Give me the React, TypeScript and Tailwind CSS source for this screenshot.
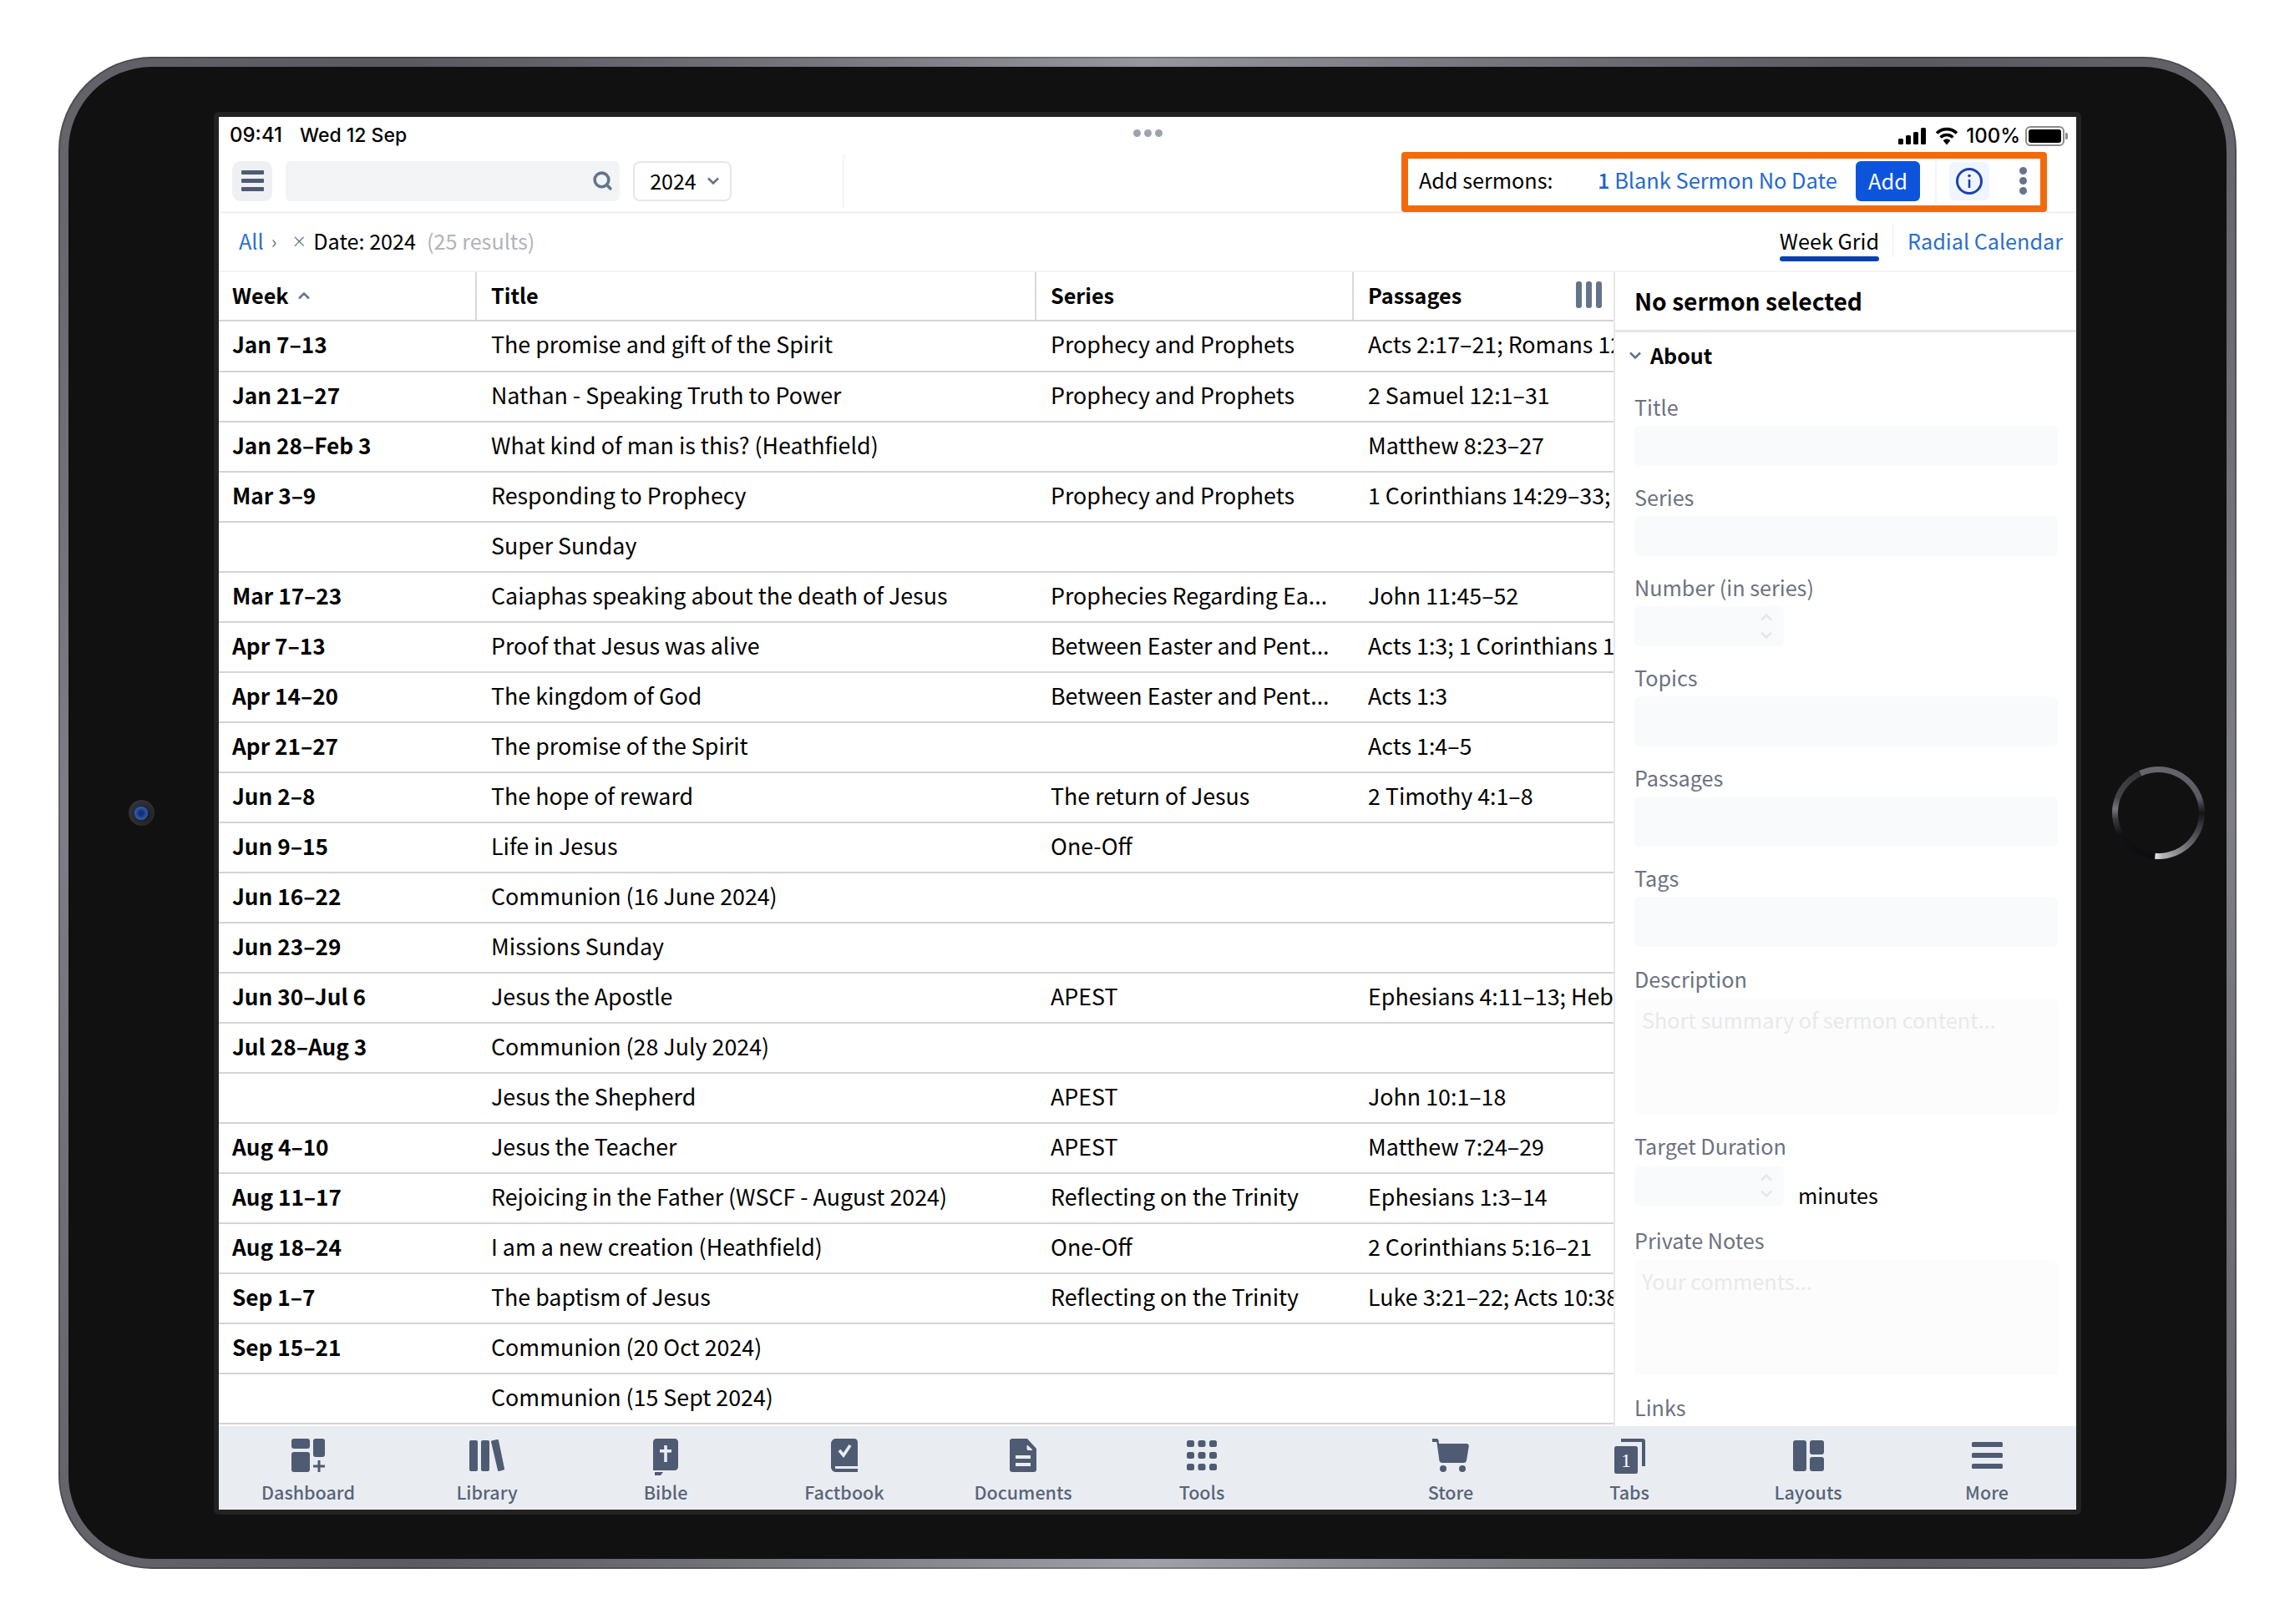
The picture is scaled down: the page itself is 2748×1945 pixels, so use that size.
import { Search } from "lucide-react";

const rows = [
    { week: "Jan 7–13", title: "The promise and gift of the Spirit", series: "Prophecy and Prophets", passages: "Acts 2:17–21; Romans 12:1–8" },
    { week: "Jan 21–27", title: "Nathan - Speaking Truth to Power", series: "Prophecy and Prophets", passages: "2 Samuel 12:1–31" },
    { week: "Jan 28–Feb 3", title: "What kind of man is this? (Heathfield)", series: "", passages: "Matthew 8:23–27" },
    { week: "Mar 3–9", title: "Responding to Prophecy", series: "Prophecy and Prophets", passages: "1 Corinthians 14:29–33; 1 Thessalonians" },
    { week: "", title: "Super Sunday", series: "", passages: "" },
    { week: "Mar 17–23", title: "Caiaphas speaking about the death of Jesus", series: "Prophecies Regarding Ea...", passages: "John 11:45–52" },
    { week: "Apr 7–13", title: "Proof that Jesus was alive", series: "Between Easter and Pent...", passages: "Acts 1:3; 1 Corinthians 15:1–8" },
    { week: "Apr 14–20", title: "The kingdom of God", series: "Between Easter and Pent...", passages: "Acts 1:3" },
    { week: "Apr 21–27", title: "The promise of the Spirit", series: "", passages: "Acts 1:4–5" },
    { week: "Jun 2–8", title: "The hope of reward", series: "The return of Jesus", passages: "2 Timothy 4:1–8" },
    { week: "Jun 9–15", title: "Life in Jesus", series: "One-Off", passages: "" },
    { week: "Jun 16–22", title: "Communion (16 June 2024)", series: "", passages: "" },
    { week: "Jun 23–29", title: "Missions Sunday", series: "", passages: "" },
    { week: "Jun 30–Jul 6", title: "Jesus the Apostle", series: "APEST", passages: "Ephesians 4:11–13; Hebrews 13:7" },
    { week: "Jul 28–Aug 3", title: "Communion (28 July 2024)", series: "", passages: "" },
    { week: "", title: "Jesus the Shepherd", series: "APEST", passages: "John 10:1–18" },
    { week: "Aug 4–10", title: "Jesus the Teacher", series: "APEST", passages: "Matthew 7:24–29" },
    { week: "Aug 11–17", title: "Rejoicing in the Father (WSCF - August 2024)", series: "Reflecting on the Trinity", passages: "Ephesians 1:3–14" },
    { week: "Aug 18–24", title: "I am a new creation (Heathfield)", series: "One-Off", passages: "2 Corinthians 5:16–21" },
    { week: "Sep 1–7", title: "The baptism of Jesus", series: "Reflecting on the Trinity", passages: "Luke 3:21–22; Acts 10:38" },
    { week: "Sep 15–21", title: "Communion (20 Oct 2024)", series: "", passages: "" },
    { week: "", title: "Communion (15 Sept 2024)", series: "", passages: "" },
];

function SignalIcon() {
    return (
        <svg width="34" height="20" viewBox="0 0 34 20" fill="currentColor">
            <rect x="0" y="13" width="6" height="7" rx="1.5" />
            <rect x="9" y="9" width="6" height="11" rx="1.5" />
            <rect x="18" y="5" width="6" height="15" rx="1.5" />
            <rect x="27" y="0" width="6" height="20" rx="1.5" />
        </svg>
    );
}

function WifiIcon() {
    return (
        <svg width="28" height="22" viewBox="0 0 28 22" fill="none" stroke="currentColor" strokeWidth="3.6">
            <path d="M2 7.5C9 1 19 1 26 7.5" />
            <path d="M6.5 12.5C11 8.5 17 8.5 21.5 12.5" />
            <path d="M14 21.5L9.6 16.2C12.2 14 15.8 14 18.4 16.2Z" fill="currentColor" stroke="none" />
        </svg>
    );
}

function BatteryIcon() {
    return (
        <div className="flex items-center">
            <div className="flex h-[24px] w-[47px] items-center rounded-[6px] border-2 border-[#8c8c8c] p-[2px]">
                <div className="h-full w-full rounded-[3px] bg-black" />
            </div>
            <div className="ml-[1px] h-[8px] w-[3px] rounded-r-[2px] bg-[#8c8c8c]" />
        </div>
    );
}

function Chevron({ up, className }: { up?: boolean; className?: string }) {
    return (
        <svg width="16" height="10" viewBox="0 0 16 10" fill="none" stroke="currentColor" strokeWidth="2.6" className={className}>
            <path d={up ? "M2 8.5L8 2.5L14 8.5" : "M2 1.5L8 7.5L14 1.5"} />
        </svg>
    );
}

function InfoIcon() {
    return (
        <svg width="34" height="34" viewBox="0 0 34 34" fill="none" stroke="#1e40af" strokeWidth="3">
            <circle cx="17" cy="17" r="14.5" />
            <path d="M17 15V25" strokeWidth="2.6" />
            <circle cx="17" cy="10.5" r="1.8" fill="#1e40af" stroke="none" />
        </svg>
    );
}

function DashboardIcon() {
    return (
        <svg width="40" height="40" viewBox="0 0 40 40" fill="currentColor">
            <rect x="0" y="0" width="22" height="12" rx="3" />
            <rect x="0" y="16" width="22" height="24" rx="3" />
            <rect x="26" y="0" width="14" height="22" rx="3" />
            <rect x="31.5" y="26" width="3" height="14" />
            <rect x="26" y="31.5" width="14" height="3" />
        </svg>
    );
}

function LibraryIcon() {
    return (
        <svg width="42" height="40" viewBox="0 0 42 40" fill="currentColor">
            <rect x="0" y="2" width="10" height="37" rx="2" />
            <rect x="14" y="2" width="10" height="37" rx="2" />
            <path d="M27.5 2.2L33.5 1C34.3 1 34.8 1.4 35 2L42 36C42.1 36.8 41.8 37.4 41 37.6L35.5 39C34.7 39.1 34.2 38.7 34 38L26 3.5C25.9 2.9 26.6 2.4 27.5 2.2Z" />
        </svg>
    );
}

function BibleIcon() {
    return (
        <svg width="30" height="44" viewBox="0 0 30 44" fill="currentColor">
            <path d="M4 0H26C28.2 0 30 1.8 30 4V34C30 36.2 28.2 38 26 38H0V4C0 1.8 1.8 0 4 0Z" />
            <path d="M2 40H12L9 44H2Z" />
            <rect x="13.2" y="8" width="3.6" height="20" fill="#e9edf2" />
            <rect x="8" y="13" width="14" height="3.6" fill="#e9edf2" />
        </svg>
    );
}

function FactbookIcon() {
    return (
        <svg width="32" height="40" viewBox="0 0 32 40" fill="currentColor">
            <path d="M6 0H28C30.2 0 32 1.8 32 4V40H6C2.7 40 0 37.3 0 34V6C0 2.7 2.7 0 6 0Z" />
            <rect x="5" y="33" width="27" height="3" fill="#e9edf2" />
            <path d="M10 14L15 20L23 8" fill="none" stroke="#e9edf2" strokeWidth="3.6" />
        </svg>
    );
}

function DocumentsIcon() {
    return (
        <svg width="32" height="40" viewBox="0 0 32 40" fill="currentColor">
            <path d="M3 0H21L32 12V37C32 38.7 30.7 40 29 40H3C1.3 40 0 38.7 0 37V3C0 1.3 1.3 0 3 0Z" />
            <path d="M21 8V12.5C21 13 21.5 13.5 22 13.5H27Z" fill="#e9edf2" stroke="#e9edf2" />
            <rect x="7" y="20" width="18" height="4" fill="#e9edf2" />
            <rect x="7" y="29" width="18" height="4" fill="#e9edf2" />
        </svg>
    );
}

function ToolsIcon() {
    return (
        <svg width="36" height="40" viewBox="0 0 36 40" fill="currentColor">
            {[2, 16, 30].map((y) =>
                [0, 13.5, 27].map((x) => <rect key={`${x}-${y}`} x={x} y={y} width="9" height="8" rx="2.5" />)
            )}
        </svg>
    );
}

function StoreIcon() {
    return (
        <svg width="44" height="40" viewBox="0 0 44 40" fill="currentColor">
            <path d="M0 0H5C6.5 0 7.5 1 7.6 2.5L8 6H41C43 6 44 7.5 43.8 9L41 26C40.7 27.8 39.5 29 37.6 29H12C10 29 8.6 27.8 8.4 26L5.4 4H0Z" />
            <circle cx="13" cy="36" r="4" />
            <circle cx="36" cy="36" r="4" />
        </svg>
    );
}

function TabsIcon() {
    return (
        <svg width="37" height="42" viewBox="0 0 37 42" fill="currentColor">
            <path d="M8 0H34C35.7 0 37 1.3 37 3V33H33V4H8Z" />
            <rect x="0" y="9" width="28" height="33" rx="2.5" />
            <text x="14" y="34" textAnchor="middle" fontSize="24" fontFamily="Liberation Serif, serif" fill="#ffffff">1</text>
        </svg>
    );
}

function LayoutsIcon() {
    return (
        <svg width="37" height="40" viewBox="0 0 37 40" fill="currentColor">
            <rect x="0" y="2" width="16" height="37" rx="3" />
            <rect x="20" y="2" width="17" height="17" rx="3" />
            <rect x="20" y="22" width="17" height="17" rx="3" />
        </svg>
    );
}

function MoreIcon() {
    return (
        <svg width="37" height="40" viewBox="0 0 37 40" fill="currentColor">
            <rect x="0" y="4" width="37" height="6" rx="1.5" />
            <rect x="0" y="17" width="37" height="6" rx="1.5" />
            <rect x="0" y="30" width="37" height="6" rx="1.5" />
        </svg>
    );
}

function TabItem({ icon, label }: { icon: React.ReactNode; label: string }) {
    return (
        <div className="flex w-[214px] flex-col items-center">
            <div className="flex h-[40px] items-start justify-center">{icon}</div>
            <div className="mt-[9px] text-[21.5px] leading-[30px] font-medium text-[#5a6478]">{label}</div>
        </div>
    );
}

function Spinner({ gap }: { gap: string }) {
    return (
        <div className={`flex h-full w-[179px] flex-col items-end justify-center rounded-[6px] bg-[#f9fafb] pr-[13px] ${gap}`}>
            <Chevron up className="text-[#e5e7eb]" />
            <Chevron className="text-[#e5e7eb]" />
        </div>
    );
}

function Label({ text, className }: { text: string; className?: string }) {
    return <div className={`text-[25.2px] leading-[32px] text-[#6b7280] ${className ?? ""}`}>{text}</div>;
}

export default function App() {
    return (
        <div className="h-[1945px] w-[2748px] overflow-hidden bg-white pt-[68px] pl-[70px] font-['Noto_Sans_CJK_KR',sans-serif] text-black">
            {/* device frame */}
            <div className="h-[1811px] w-[2608px] rounded-[112px] bg-[conic-gradient(from_0deg,#96969d,#5a5a60_45deg,#7e7e86_90deg,#5a5a60_135deg,#a0a0a8_180deg,#5a5a60_225deg,#7e7e86_270deg,#5a5a60_315deg,#96969d)] p-[12px] shadow-[inset_0_0_0_2px_rgba(0,0,0,0.22)]">
                <div className="flex h-[1787px] w-[2584px] items-center rounded-[100px] bg-[#111111]">
                    <div className="flex flex-1 justify-center">
                        <div className="flex h-[31px] w-[31px] items-center justify-center rounded-full bg-[radial-gradient(circle_at_60%_60%,#1a1a1e,#3c3c42)]">
                            <div className="h-[16px] w-[16px] rounded-full bg-[radial-gradient(circle,#143070_20%,#2f5fc0_70%)]" />
                        </div>
                    </div>

                    <div className="box-content flex h-[1668px] w-[2224px] flex-col overflow-hidden rounded-[6px] border-[6px] border-[#222222] bg-white">
                        {/* status bar */}
                        <div className="relative flex h-[46px] shrink-0 items-center pr-[10px] pl-[13px] font-['Inter',sans-serif] text-[24px] leading-[30px]">
                            <span className="mb-[2px] font-medium">09:41</span>
                            <span className="mb-[2px] ml-[21px] text-[23px] font-medium">Wed 12 Sep</span>
                            <div className="absolute top-[15px] left-[1095px] flex gap-[4px]">
                                <div className="h-[9px] w-[9px] rounded-full bg-[#9ca3af]" />
                                <div className="h-[9px] w-[9px] rounded-full bg-[#9ca3af]" />
                                <div className="h-[9px] w-[9px] rounded-full bg-[#9ca3af]" />
                            </div>
                            <div className="ml-auto flex items-center">
                                <SignalIcon />
                                <div className="ml-[10px]">
                                    <WifiIcon />
                                </div>
                                <span className="ml-[9px] font-medium">100%</span>
                                <div className="ml-[6px]">
                                    <BatteryIcon />
                                </div>
                            </div>
                        </div>

                        {/* toolbar */}
                        <div className="relative flex h-[70px] shrink-0 items-center border-b-[3px] border-[#f3f4f6] pb-[5px] pl-[16px] whitespace-nowrap">
                            <div className="flex h-[48px] w-[48px] flex-col items-center justify-center gap-[5px] rounded-[10px] bg-[#eef0f3]">
                                <div className="h-[5px] w-[27px] rounded-[1px] bg-[#4f5b73]" />
                                <div className="h-[5px] w-[27px] rounded-[1px] bg-[#4f5b73]" />
                                <div className="h-[5px] w-[27px] rounded-[1px] bg-[#4f5b73]" />
                            </div>
                            <div className="ml-[16px] flex h-[48px] w-[400px] items-center justify-end rounded-[6px] bg-[#f3f4f6] pr-[8px]">
                                <Search size={25} strokeWidth={3.4} className="text-[#64748b]" />
                            </div>
                            <div className="ml-[16px] flex h-[48px] w-[118px] items-center justify-center gap-[12px] rounded-[8px] border-2 border-[#e5e7eb] pb-[2px] pl-[6px] text-[25px] leading-[32px]">
                                2024
                                <Chevron className="mt-[2px] text-[#64748b]" />
                            </div>
                            <div className="ml-[133px] h-[64px] w-[2px] bg-[#f3f4f6]" />

                            <span className="mb-[3px] ml-[688px] w-[214px] text-[25.2px] leading-[32px]">Add sermons:</span>
                            <span className="mb-[3px] w-[309px] text-[25.4px] leading-[32px] text-[#2468d2]">
                                <span className="font-medium text-[#1a5fd6]">1</span> Blank Sermon No Date
                            </span>
                            <div className="flex h-[48px] w-[77px] items-center justify-center rounded-[6px] bg-[#0d54dd] pb-[2px] text-[25.4px] leading-[32px] text-white">Add</div>
                            <div className="ml-[18px] h-[60px] w-[2px] bg-[#f3f4f6]" />
                            <div className="ml-[15px] flex h-[46px] w-[48px] items-center justify-center rounded-[6px] bg-[#eff6ff]">
                                <InfoIcon />
                            </div>
                            <div className="ml-[36px] flex flex-col gap-[3px]">
                                <div className="h-[9px] w-[9px] rounded-full bg-[#64748b]" />
                                <div className="h-[9px] w-[9px] rounded-full bg-[#64748b]" />
                                <div className="h-[9px] w-[9px] rounded-full bg-[#64748b]" />
                            </div>

                            {/* orange callout drawn over the toolbar */}
                            <div className="absolute top-[-4px] left-[1416px] h-[72px] w-[773px] rounded-[4px] border-[8px] border-[#f26a0c]" />
                        </div>

                        {/* breadcrumb row */}
                        <div className="flex h-[70px] shrink-0 items-center border-b-[2px] border-[#f3f4f6] pr-[16px] pb-[3px] pl-[24px] text-[25.2px] leading-[32px]">
                            <span className="text-[#2f6fd0]">All</span>
                            <span className="ml-[9px] text-[22px] text-[#64748b]">›</span>
                            <span className="ml-[18px] text-[18px] text-[#64748b]">×</span>
                            <span className="ml-[8px]">Date: 2024</span>
                            <span className="ml-[13px] text-[#b0b4ba]">(25 results)</span>
                            <div className="ml-auto flex h-full flex-col justify-end">
                                <span className="mb-[3px]">Week Grid</span>
                                <div className="mb-[8px] h-[6px] rounded-[3px] bg-[#0a3fb0]" />
                            </div>
                            <div className="mx-[16px] h-[40px] w-[2px] bg-[#f3f4f6]" />
                            <span className="text-[#2a6fd0]">Radial Calendar</span>
                        </div>

                        {/* main area */}
                        <div className="flex min-h-0 flex-1">
                            <div className="w-[1670px] shrink-0 text-[26.8px] leading-[36px]">
                                <div className="flex h-[59px] items-stretch border-b-2 border-[#d4d4d4] text-[25.2px] font-semibold">
                                    <div className="flex w-[309px] items-center gap-[10px] border-r-2 border-[#d9d9d9] pb-[3px] pl-[16px]">
                                        Week
                                        <Chevron up className="mt-[2px] text-[#64748b]" />
                                    </div>
                                    <div className="flex w-[670px] items-center border-r-2 border-[#d9d9d9] pb-[3px] pl-[17px]">Title</div>
                                    <div className="flex w-[380px] items-center border-r-2 border-[#d9d9d9] pb-[3px] pl-[17px]">Series</div>
                                    <div className="flex flex-1 items-center pr-[14px] pb-[3px] pl-[17px]">
                                        Passages
                                        <div className="ml-auto flex h-[32px] gap-[5px]">
                                            <div className="h-full w-[7px] rounded-[3px] bg-[#64748b]" />
                                            <div className="h-full w-[7px] rounded-[3px] bg-[#64748b]" />
                                            <div className="h-full w-[7px] rounded-[3px] bg-[#64748b]" />
                                        </div>
                                    </div>
                                </div>
                                {rows.map((row, index) => (
                                    <div key={index} className={`flex items-center border-b-2 border-[#d4d4d4] pb-[3px] ${index === 0 ? "h-[61px] pb-[5px]" : "h-[60px]"}`}>
                                        <div className="w-[309px] shrink-0 pl-[16px] text-[26.2px] font-semibold">{row.week}</div>
                                        <div className="w-[670px] shrink-0 pl-[17px] whitespace-nowrap">{row.title}</div>
                                        <div className="w-[380px] shrink-0 pl-[17px] whitespace-nowrap">{row.series}</div>
                                        <div className="min-w-0 flex-1 overflow-hidden pl-[17px] whitespace-nowrap">{row.passages}</div>
                                    </div>
                                ))}
                            </div>

                            {/* right panel */}
                            <div className="min-w-0 flex-1 overflow-hidden border-l-2 border-[#e5e7eb]">
                                <div className="flex h-[72px] items-center border-b-[3px] border-[#e5e7eb] pl-[23px] text-[28.2px] leading-[38px] font-semibold">No sermon selected</div>
                                <div className="mt-[10px] flex h-[36px] items-center pl-[16px] text-[25px] leading-[32px] font-semibold">
                                    <Chevron className="text-[#64748b]" />
                                    <span className="mb-[2px] ml-[10px]">About</span>
                                </div>
                                <div className="flex flex-col pt-[27px] pr-[22px] pl-[23px]">
                                    <Label text="Title" />
                                    <div className="mt-[7px] h-[48px] rounded-[6px] bg-[#f9fafb]" />
                                    <Label text="Series" className="mt-[21px]" />
                                    <div className="mt-[7px] h-[48px] rounded-[6px] bg-[#f9fafb]" />
                                    <Label text="Number (in series)" className="mt-[21px]" />
                                    <div className="mt-[7px] h-[48px]">
                                        <Spinner gap="gap-[12px]" />
                                    </div>
                                    <Label text="Topics" className="mt-[21px]" />
                                    <div className="mt-[7px] h-[60px] rounded-[6px] bg-[#f9fafb]" />
                                    <Label text="Passages" className="mt-[21px]" />
                                    <div className="mt-[7px] h-[60px] rounded-[6px] bg-[#f9fafb]" />
                                    <Label text="Tags" className="mt-[21px]" />
                                    <div className="mt-[7px] h-[60px] rounded-[6px] bg-[#f9fafb]" />
                                    <Label text="Description" className="mt-[22px]" />
                                    <div className="mt-[8px] h-[139px] rounded-[6px] bg-[#fcfcfc] px-[9px] py-[9px] text-[25.2px] leading-[32px] text-[#e8e9ec]">Short summary of sermon content...</div>
                                    <Label text="Target Duration" className="mt-[21px]" />
                                    <div className="mt-[9px] flex h-[47px] items-end">
                                        <Spinner gap="gap-[10px]" />
                                        <span className="mb-[-3px] ml-[17px] text-[25.2px] leading-[32px]">minutes</span>
                                    </div>
                                    <Label text="Private Notes" className="mt-[25px]" />
                                    <div className="mt-[8px] h-[138px] rounded-[6px] bg-[#fcfcfc] px-[9px] py-[9px] text-[25.2px] leading-[32px] text-[#e8e9ec]">Your comments...</div>
                                    <Label text="Links" className="mt-[22px]" />
                                </div>
                            </div>
                        </div>

                        {/* tab bar */}
                        <div className="flex h-[100px] shrink-0 justify-between bg-[#e9edf2] pt-[15px] text-[#4f5b73]">
                            <div className="flex">
                                <TabItem icon={<DashboardIcon />} label="Dashboard" />
                                <TabItem icon={<LibraryIcon />} label="Library" />
                                <TabItem icon={<BibleIcon />} label="Bible" />
                                <TabItem icon={<FactbookIcon />} label="Factbook" />
                                <TabItem icon={<DocumentsIcon />} label="Documents" />
                                <TabItem icon={<ToolsIcon />} label="Tools" />
                            </div>
                            <div className="flex">
                                <TabItem icon={<StoreIcon />} label="Store" />
                                <TabItem icon={<TabsIcon />} label="Tabs" />
                                <TabItem icon={<LayoutsIcon />} label="Layouts" />
                                <TabItem icon={<MoreIcon />} label="More" />
                            </div>
                        </div>
                    </div>

                    <div className="flex flex-1 justify-center">
                        {/* home button ring */}
                        <div className="ml-[10px] flex h-[111px] w-[111px] items-center justify-center rounded-full bg-[conic-gradient(#66666c_0deg,#5c5c62_70deg,#141416_90deg,#333338_105deg,#66666c_135deg,#b5b5b8_175deg,#e4e4e4_184deg,#0c0c10_185deg,#111114_240deg,#3a3a40_262deg,#77777c_275deg,#444449_290deg,#333338_335deg,#66666c_336deg)]">
                            <div className="h-[97px] w-[97px] rounded-full bg-[#111111]" />
                        </div>
                    </div>
                </div>
            </div>
        </div>
    );
}
